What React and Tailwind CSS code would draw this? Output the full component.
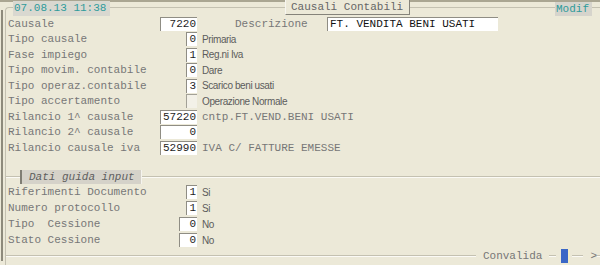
import React from "react"

const box = "h-[14px] bg-white border-t border-l border-[#8f8d84] text-right pr-[1px] leading-[13px] text-[#1e1e1e]"

function Row({ label, value, w, desc, note, h = "h-[15.5px]" }) {
    return (
        <div className={`${h} flex items-center pl-[2px]`}>
            <span className="w-[152px] whitespace-pre shrink-0">{label}</span>
            <div className="w-[37px] flex justify-end shrink-0">
                <div className={`${w} ${box}`}>{value}</div>
            </div>
            {desc && <span className="ml-[5px] font-['Liberation_Sans',sans-serif] text-[10px] tracking-[-0.4px] text-[#5c5c5c]">{desc}</span>}
            {note && <span className="ml-[5px] whitespace-pre">{note}</span>}
        </div>
    )
}

function Line({ className }) {
    return <div className={`h-[2px] border-t border-[#c4c1b1] border-b border-b-[#fbfaf5] ${className}`} />
}

export default function App() {
    return (
        <div className="w-[600px] h-[265px] bg-[#ece9d8] overflow-hidden font-['Liberation_Mono',monospace] text-[11px] text-[#777] flex flex-col">
            <div className="h-[2px] bg-[#aaa692] shrink-0" />
            <div className="flex-1 flex">
                <div className="w-[2px] ml-[1px] mt-[8px] mb-[4px] bg-[#8d8a7b]" />
                <div className="flex-1 ml-[2px] mt-[5px] border-t border-l border-[#c4c1b1] rounded-tl-[4px] flex flex-col">
                    {/* header */}
                    <div className="h-[15px] -mt-[7px] flex items-start shrink-0">
                        <div className="ml-[7px] w-[97px] h-[15px] bg-[#d9d8d0] text-[#2f9b9b] leading-[15px] pl-[1px]">07.08.13 11:38</div>
                        <div className="ml-[175px] -mt-[1px] w-[125px] h-[15px] bg-[#ece9d8] border-r border-b border-[#85837a] border-l border-l-[#f7f6f0] leading-[15px] pl-[5px] text-[#666]">Causali Contabili</div>
                        <div className="ml-[145px] mt-[1px] w-[37px] h-[14px] bg-[#d6d4cc] text-[#2f9b9b] leading-[14px] pl-[1px]">Modif</div>
                    </div>

                    <div className="h-[15.5px] flex items-center pl-[2px]">
                        <span className="w-[152px] shrink-0">Causale</span>
                        <div className="w-[37px] flex justify-end shrink-0">
                            <div className={`w-[37px] ${box}`}>7220</div>
                        </div>
                        <span className="ml-[38px] w-[92px]">Descrizione</span>
                        <div className="w-[171px] h-[14px] bg-white border-t border-l border-[#8f8d84] leading-[13px] pl-[2px] text-[#111]">FT. VENDITA BENI USATI</div>
                    </div>
                    <Row label="Tipo causale" value="0" w="w-[11px]" desc="Primaria" />
                    <Row label="Fase impiego" value="1" w="w-[11px]" desc="Reg.ni Iva" />
                    <Row label="Tipo movim. contabile" value="0" w="w-[11px]" desc="Dare" />
                    <Row label="Tipo operaz.contabile" value="3" w="w-[11px]" desc="Scarico beni usati" />
                    <div className="h-[15.5px] flex items-center pl-[2px]">
                        <span className="w-[152px] shrink-0">Tipo accertamento</span>
                        <div className="w-[37px] flex justify-end shrink-0">
                            <div className="w-[11px] h-[14px] bg-[#f3f1e8] border-t border-l border-[#a3a197]" />
                        </div>
                        <span className="ml-[5px] font-['Liberation_Sans',sans-serif] text-[10px] tracking-[-0.4px] text-[#5c5c5c]">Operazione Normale</span>
                    </div>
                    <Row label="Rilancio 1^ causale" value="57220" w="w-[37px]" note="cntp.FT.VEND.BENI USATI" />
                    <Row label="Rilancio 2^ causale" value="0" w="w-[37px]" />
                    <Row label="Rilancio causale iva" value="52990" w="w-[37px]" note="IVA C/ FATTURE EMESSE" />

                    {/* Dati guida input */}
                    <div className="mt-[14.5px] h-[14px] flex items-center shrink-0">
                        <Line className="w-[14px]" />
                        <div className="w-[122px] h-[14px] bg-[#d5d2c9] border-l-2 border-[#807e74] border-r border-r-[#f5f4ee] italic leading-[14px] pl-[7px] text-[#5e5e5e]">Dati guida input</div>
                        <Line className="flex-1" />
                    </div>
                    <div className="flex flex-col">
                        <Row h="h-[16px]" label="Riferimenti Documento" value="1" w="w-[11px]" desc="Si" />
                        <Row h="h-[16px]" label="Numero protocollo" value="1" w="w-[11px]" desc="Si" />
                        <Row h="h-[16px]" label="Tipo  Cessione" value="0" w="w-[18px]" desc="No" />
                        <Row h="h-[16px]" label="Stato Cessione" value="0" w="w-[18px]" desc="No" />
                    </div>

                    {/* bottom */}
                    <div className="mt-[1px] h-[14px] flex items-center shrink-0">
                        <Line className="flex-1" />
                        <span className="mx-[7px]">Convalida</span>
                        <Line className="w-[7px]" />
                        <div className="ml-[5px] w-[9px] h-[14px] bg-[#3a67c6] border-r-2 border-[#f3ecc6]" />
                        <Line className="ml-[2px] w-[11px]" />
                        <span className="ml-[7px]">&gt;</span>
                        <Line className="w-[3px] shrink-0" />
                    </div>
                </div>
            </div>
        </div>
    )
}
